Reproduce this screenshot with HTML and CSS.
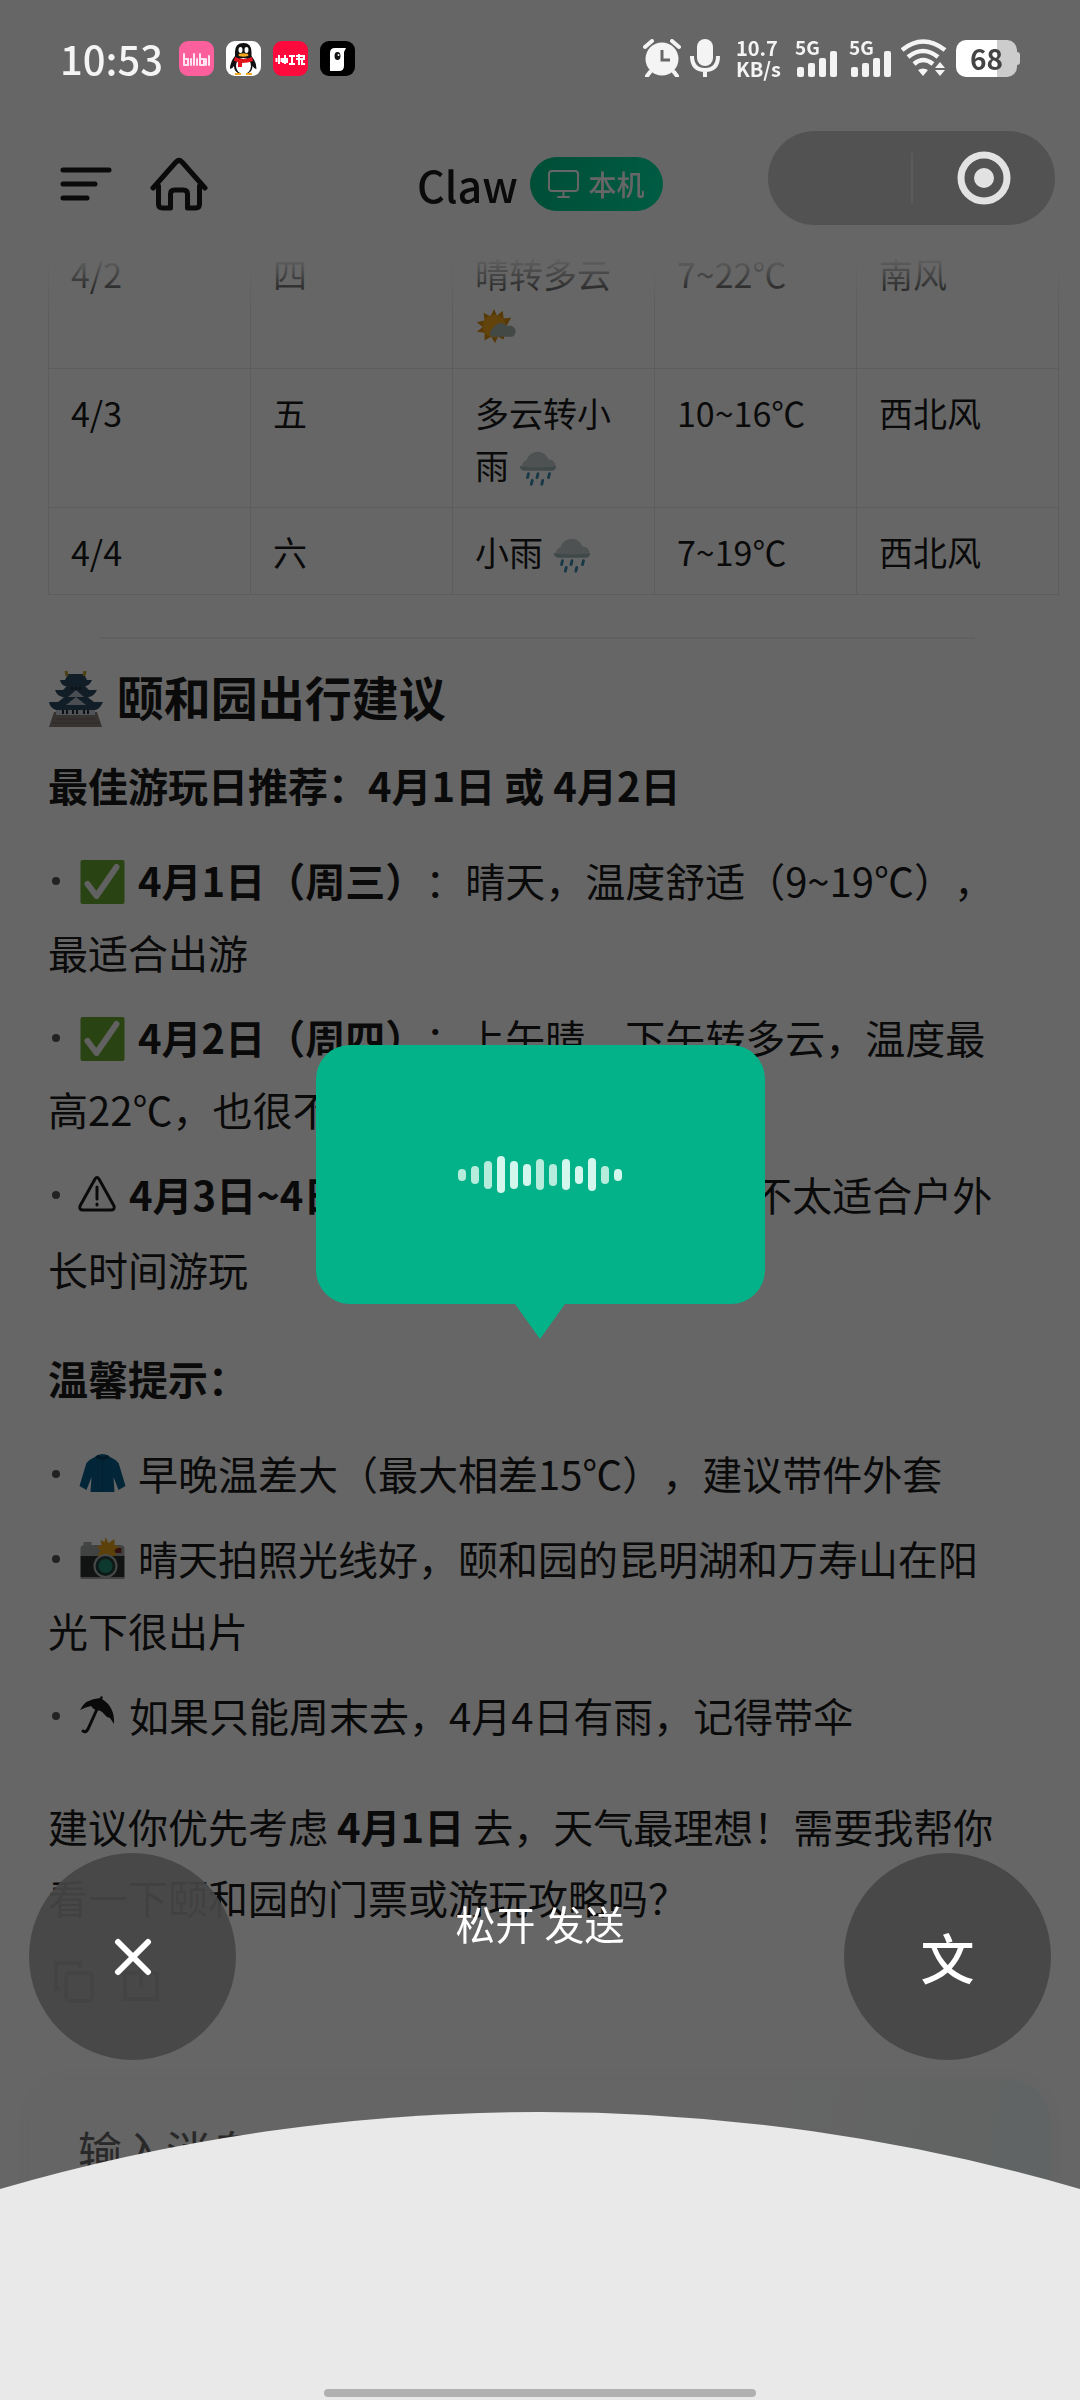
FILE: index.html
```html
<!DOCTYPE html>
<html lang="zh-CN">
<head>
<meta charset="utf-8">
<meta name="viewport" content="width=device-width, initial-scale=1">
<title>Claw</title>
<link rel="stylesheet" href="styles.css">
</head>
<body>
<svg class="defs" aria-hidden="true">
  <symbol id="rain" viewBox="0 0 42 44">
    <path d="M4 22a7 7 0 0 1 5-8 12 12 0 0 1 23-1 7 7 0 0 1 7 9z" fill="#c4cccc"/>
    <path d="M2 20c8 2 30 2 38 0 0 3-2 5-5 5H8c-4 0-6-2-6-5z" fill="#9fb6b6"/>
    <path d="M11 28l-1 4M21 28l-1 4M33 28l-1 4M15 35l-1 4M26 35l-1 4" stroke="#3a8cb0" stroke-width="3" stroke-linecap="round"/>
  </symbol>
  <symbol id="check" viewBox="0 0 50 46">
    <rect x="2" y="1" width="44" height="44" rx="2" fill="#66a82e"/>
    <path d="M9 25l9 12L38 8" fill="none" stroke="#f2f2f2" stroke-width="6" stroke-linecap="round" stroke-linejoin="round"/>
  </symbol>
  <symbol id="signal" viewBox="0 0 40 26">
    <rect x="0" y="16" width="7" height="10" rx="2"/><rect x="11" y="12" width="7" height="14" rx="2"/><rect x="22" y="7" width="7" height="19" rx="2"/><rect x="33" y="0" width="7" height="26" rx="2"/>
  </symbol>
</svg>

<div class="app">
  <header class="header">
    <nav class="nav">
      <button class="icon-btn" aria-label="菜单"><svg width="52" height="36" viewBox="0 0 52 36" stroke="#1a1a1a" stroke-width="5" stroke-linecap="round"><path d="M3 4H49M3 18H35M3 32H27"/></svg></button>
      <button class="icon-btn" aria-label="主页"><svg width="58" height="54" viewBox="0 0 58 54" fill="none" stroke="#1a1a1a" stroke-width="5" stroke-linecap="round" stroke-linejoin="round"><path d="M3 31L26 5q3-3 6 0L55 31M8.500 29v18q0 4 4 4h8V37q0-4 4-4h9q4 0 4 4v14h8q4 0 4-4V29"/></svg></button>
    </nav>
    <h1 class="title">Claw</h1>
    <button class="device"><svg width="31" height="30" viewBox="0 0 31 30" fill="none" stroke="#fff" stroke-width="2" stroke-linecap="round"><rect x="1" y="2" width="29" height="20" rx="3"/><path d="M15.500 22v5M10 28h11"/></svg>本机</button>
  </header>

  <main class="message">
    <table class="forecast">
      <tbody>
        <tr><td>4/2</td><td>四</td><td>晴转多云<svg class="emoji-s" viewBox="0 0 42 44" role="img" aria-label="晴间多云"><path d="M19 1l3 7 6-5 1 8 8-1-4 7-4 16-6-3-3 7-4-7-7 4v-8l-8-1 6-5-6-5 8-2-1-8 7 4z" fill="#d98e12"/><circle cx="19" cy="19" r="12" fill="#f5a81c"/><path d="M16 30a6 6 0 0 1 2-9 9 9 0 0 1 15-2 6 6 0 0 1 5 11z" fill="#a9b8ae"/></svg></td><td>7~22℃</td><td>南风</td></tr>
        <tr><td>4/3</td><td>五</td><td>多云转小雨 <svg class="emoji-s" role="img" aria-label="雨"><use href="#rain"/></svg></td><td>10~16℃</td><td>西北风</td></tr>
        <tr><td>4/4</td><td>六</td><td>小雨 <svg class="emoji-s" role="img" aria-label="雨"><use href="#rain"/></svg></td><td>7~19℃</td><td>西北风</td></tr>
      </tbody>
    </table>
    <hr class="rule">
    <h2 class="heading"><svg class="emoji-l" viewBox="0 0 58 58" role="img" aria-label="城堡">
      <path d="M1 57l5-15h43l5 15z" fill="#8b7f7b"/>
      <path d="M8 36h39v9H8zM14 23h27v9H14zM17 12h21v9H17z" fill="#c9d0dc"/>
      <path d="M1 32h9l8-6 10-6 10 6 8 6h9q-3 7-8 8H8q-6-2-7-8z" fill="#2c4a63"/>
      <path d="M18 35l10-8 10 8z" fill="#b9c1ce"/>
      <path d="M7 20h8l5-5h16l5 5h8q-3 6-8 7H15q-6-1-8-7z" fill="#2c4a63"/>
      <path d="M20 27l8-7 8 7z" fill="#b9c1ce"/>
      <path d="M12 10h5l3-6h16l3 6h5q-2 5-6 6H17q-4-1-5-6z" fill="#2c4a63"/>
      <path d="M18 1l1 5M37 1l-1 5" stroke="#c0a02a" stroke-width="3"/>
      <path d="M15 40v4M19 40v4M25 40v4M29 40v4M36 40v4M40 40v4M24 17v3M28 17v3M32 17v3" stroke="#26282e" stroke-width="2"/>
      <path d="M8 49h38M5 53h46" stroke="#776b68" stroke-width="1"/></svg> 颐和园出行建议</h2>
    <p class="para"><strong>最佳游玩日推荐：4月1日 或 4月2日</strong></p>
    <ul class="list">
      <li><svg class="emoji" role="img" aria-label="推荐"><use href="#check"/></svg> <strong>4月1日（周三）</strong>：晴天，温度舒适（9~19℃），最适合出游</li>
      <li><svg class="emoji" role="img" aria-label="推荐"><use href="#check"/></svg> <strong>4月2日（周四）</strong>：上午晴，下午转多云，温度最高22℃，也很不错</li>
      <li><span class="glyph"><svg width="38" height="38" viewBox="0 0 38 38" role="img" aria-label="注意" fill="none" stroke="#1a1a1a" stroke-width="3" stroke-linejoin="round" stroke-linecap="round"><path d="M17 4q2-3 4 0l15 27q1 4-3 4H5q-4 0-3-4zM19 12v12M19 29v1"/></svg></span> <strong>4月3日~4日（周五六）</strong> ：有小雨，不太适合户外长时间游玩</li>
    </ul>
    <p class="para"><strong>温馨提示：</strong></p>
    <ul class="list">
      <li><svg class="emoji" viewBox="0 0 50 46" role="img" aria-label="外套"><path d="M18 4q6-4 12 0l7 4q3 2 4 6l6 20-7 4-5-13 1 15H12l1-15-5 13-7-4 6-20q1-4 4-6z" fill="#075f8c"/><path d="M18 4q6 5 12 0" fill="none" stroke="#033f60" stroke-width="3"/><path d="M24 8v31" stroke="#064f76" stroke-width="1"/></svg> 早晚温差大（最大相差15℃），建议带件外套</li>
      <li><svg class="emoji" viewBox="0 0 50 46" role="img" aria-label="相机"><path d="M2 12q0-4 4-4h36q4 0 4 4v8H2z" fill="#a3a6a6"/><path d="M2 19h44v21H2z" fill="#2f3333"/><path d="M2 40h44v2H2z" fill="#a3a6a6"/><path d="M5 5h8v4H5z" fill="#aaa"/><path d="M35 11h8v5h-8z" fill="#7a2a22"/><path d="M27 0l3 6 6-4v6l5 2-5 3 2 6H19l3-6-4-3 5-2-1-5 4 2z" fill="#e5a21c"/><circle cx="27" cy="29" r="12" fill="#b3b8b7"/><circle cx="27" cy="29" r="10" fill="#24423d"/><circle cx="27" cy="29" r="7" fill="#248f75"/></svg> 晴天拍照光线好，颐和园的昆明湖和万寿山在阳光下很出片</li>
      <li><span class="glyph"><svg width="38" height="38" viewBox="0 0 38 38" role="img" aria-label="雨伞"><path d="M2 14Q7 3 22 2l1-2 2 1-1 2q13 8 12 25l-4-6q-4-1-6-4-3-4-8-4-3-1-5-4-5 1-11 4z" fill="#1a1a1a"/><path d="M20 11L10 33q-2 4-5 2" fill="none" stroke="#1a1a1a" stroke-width="3" stroke-linecap="round"/></svg></span> 如果只能周末去，4月4日有雨，记得带伞</li>
    </ul>
    <p class="para closing">建议你优先考虑 <strong>4月1日</strong> 去，天气最理想！需要我帮你看一下颐和园的门票或游玩攻略吗？</p>
    <div class="actions">
      <button class="icon-btn" aria-label="复制"><svg width="44" height="44" viewBox="0 0 44 44" fill="none" stroke="#777" stroke-width="4"><rect x="14" y="14" width="26" height="28" rx="4"/><path d="M8 30H4V4h24v5"/></svg></button>
      <button class="icon-btn" aria-label="分享"><svg width="38" height="44" viewBox="0 0 38 44" fill="none" stroke="#777" stroke-width="4"><path d="M3 14h32v26H3zM19 4v24"/></svg></button>
    </div>
  </main>

  <form class="composer"><input class="composer-input" type="text" placeholder="输入消息" aria-label="输入消息"></form>
</div>

<section class="recorder" aria-label="语音输入">
  <div class="bubble">
    <div class="wave"><i class="h1 dim"></i><i class="h2 dim"></i><i class="h4 dim"></i><i class="h7"></i><i class="h4"></i><i class="h3"></i><i class="h5 dim"></i><i class="h3 dim"></i><i class="h5"></i><i class="h2"></i><i class="h6"></i><i class="h2 dim"></i><i class="h1"></i></div>
  </div>
  <div class="controls">
    <button class="round" aria-label="取消"><svg width="38" height="38" viewBox="0 0 38 38" stroke="#fff" stroke-width="6" stroke-linecap="round"><path d="M4 4l30 30M34 4L4 34"/></svg></button>
    <p class="hint">松开 发送</p>
    <button class="round">文</button>
  </div>
  <svg class="dome" viewBox="0 0 1080 288" preserveAspectRatio="none" aria-hidden="true"><path d="M0 77A1932 1932 0 0 1 1080 77V288H0z" fill="#e9e9e9"/></svg>
  <div class="home-bar"></div>
</section>

<div class="status">
  <div class="status-left">
    <time class="clock">10:53</time>
    <span class="appicon pink"><svg width="35" height="35" viewBox="0 0 35 35" fill="none" stroke="#ffe3ee" stroke-width="2" stroke-linecap="round" aria-hidden="true"><path d="M5 13v11M5 18h4v6H5M12 18v6M15 13v11M18 18v6M21 13v11M21 18h4v6h-4M27 18v6M30 15v9"/></svg></span>
    <span class="appicon white"><svg width="35" height="35" viewBox="0 0 35 35" aria-hidden="true"><path d="M17.500 2q8 0 8 9v4q5 6 5 13-2 0-4-3 0 5-4 7H12q-4-2-4-7-2 3-4 3 0-7 5-13v-4q0-9 8.500-9z" fill="#111"/><ellipse cx="17.500" cy="25" rx="7.500" ry="8" fill="#fff"/><ellipse cx="14.500" cy="9" rx="2" ry="3" fill="#fff"/><ellipse cx="20.500" cy="9" rx="2" ry="3" fill="#fff"/><ellipse cx="17.500" cy="14" rx="5" ry="1.700" fill="#f5a91d"/><path d="M9 16q8 4 17 0l1 4q-5 2-11 2v4h-4v-5l-4-1z" fill="#e3151c"/><path d="M9 33h6M20 33h6" stroke="#f5a91d" stroke-width="2"/></svg></span>
    <span class="appicon red"><svg width="35" height="35" viewBox="0 0 35 35" fill="none" stroke="#fff" stroke-width="2" aria-hidden="true"><path d="M6 14v9M3.500 17v4M8.500 17v4M12 14v9M10 17v5M14 17v5M16 15h6M19 15v8M16 23h6M23 15h8v3h-8M26 13v11M29 18v5h3"/></svg></span>
    <span class="appicon black"><svg width="35" height="35" viewBox="0 0 35 35" aria-hidden="true"><path d="M10 12q0-5 5-5h11l-2 4v14q0 5-5 5h-9z" fill="#fff"/><ellipse cx="17.500" cy="15" rx="3" ry="4" fill="#111"/><circle cx="18.500" cy="14" r="1" fill="#fff"/></svg></span>
  </div>
  <div class="status-right">
    <svg width="38" height="38" viewBox="0 0 38 38" aria-hidden="true"><circle cx="19" cy="20" r="16.500" fill="#f4f4f4"/><path d="M2 8l7-6M36 8l-7-6M7 33l-3 4M31 33l3 4" stroke="#f4f4f4" stroke-width="4" stroke-linecap="round"/><path d="M19 11v10h8" fill="none" stroke="#666" stroke-width="3"/></svg>
    <svg class="mic" width="30" height="38" viewBox="0 0 30 38" aria-hidden="true"><rect x="7" y="0" width="16" height="27" rx="8" fill="#f4f4f4"/><path d="M2 17q0 14 13 14t13-14M15 31v7" fill="none" stroke="#f4f4f4" stroke-width="4"/></svg>
    <div class="rate"><span>10.7</span><span>KB/s</span></div>
    <div class="cell"><span>5G</span><svg viewBox="0 0 40 26" aria-hidden="true"><use href="#signal"/></svg></div>
    <div class="cell"><span>5G</span><svg viewBox="0 0 40 26" aria-hidden="true"><use href="#signal"/></svg></div>
    <svg class="wifi" width="46" height="38" viewBox="0 0 46 38" aria-hidden="true"><g fill="none" stroke="#f4f4f4" stroke-width="4.500"><path d="M1 11Q22-6 44 11M7 18Q22 6 37 18M13 25Q22 17 32 25"/></g><path d="M17 31q5-3 10 0l-5 6zM34 29l5-6 5 6zM34 31l5 6 5-6z" fill="#f4f4f4"/></svg>
    <div class="battery">68</div>
  </div>
</div>

<div class="capsule">
  <button class="capsule-btn" aria-label="更多"></button>
  <button class="capsule-btn target" aria-label="关闭"><svg width="54" height="54" viewBox="0 0 54 54"><circle cx="27" cy="27" r="23" fill="none" stroke="#e2e2e2" stroke-width="7"/><circle cx="27" cy="27" r="10" fill="#e2e2e2"/></svg></button>
</div>
</body>
</html>
```
FILE: styles.css
```css
* { box-sizing: border-box; }
body {
  margin: 0;
  background: #fff;
  color: #1a1a1a;
  font-family: "Noto Sans CJK SC", sans-serif;
  font-size: 40px;
  line-height: 72px;
  text-spacing-trim: space-all;
}
button { border: 0; padding: 0; margin: 0; background: none; color: inherit; font: inherit; }
h1, h2, p, ul { margin: 0; padding: 0; }
svg { display: block; }
.defs { position: absolute; width: 0; height: 0; }

.app { display: flex; flex-direction: column; min-height: 100vh; }

.header {
  position: fixed;
  top: 0;
  left: 0;
  right: 0;
  z-index: 1;
  display: flex;
  align-items: center;
  justify-content: center;
  gap: 12px;
  height: 310px;
  padding-bottom: 72px;
  padding-top: 130px;
  background: linear-gradient(#fff 256px, rgba(255, 255, 255, 0) 310px);
}
.nav { position: absolute; left: 60px; display: flex; align-items: center; gap: 38px; }
.icon-btn { display: flex; }
.title { font-size: 43px; font-weight: 500; line-height: 54px; }
.device {
  display: flex;
  align-items: center;
  justify-content: center;
  gap: 9px;
  width: 133px;
  height: 54px;
  border-radius: 27px;
  background: linear-gradient(100deg, #00c288, #00e6aa);
  color: #fff;
  font-size: 28px;
  font-weight: 500;
}

.message { flex: 1; padding: 229px 21px 61px 48px; }
.forecast {
  width: 100%;
  table-layout: fixed;
  border-collapse: collapse;
  font-size: 34px;
  line-height: 52px;
}
.forecast td {
  padding: 18px 22px 16px;
  border: 1px solid #e9e9e9;
  text-align: left;
  vertical-align: top;
}
.emoji, .emoji-s, .emoji-l, .glyph { display: inline-block; }
.emoji-s { width: 42px; height: 42px; vertical-align: -10px; }
.emoji { width: 51px; height: 46px; vertical-align: -8px; }
.emoji-l { width: 58px; height: 58px; vertical-align: -12px; }
.glyph { width: 42px; height: 75px; padding-top: 17px; vertical-align: top; }
.rule { height: 2px; margin: 42px 84px 0 52px; border: 0; background: #f0f0f0; }
.heading { margin-top: 24px; font-size: 47px; font-weight: 700; line-height: 66px; }
.para { margin-top: 20px; padding-right: 46px; }
.list { margin: 23px 0 37px; padding-right: 46px; list-style: none; }
.list li + li { margin-top: 13px; }
.list li::before {
  content: "";
  display: inline-block;
  width: 8px;
  height: 8px;
  margin: 0 18px 0 4px;
  border-radius: 50%;
  background: #555;
  vertical-align: 12px;
}
.closing { line-height: 71px; }
.actions { display: flex; gap: 26px; margin-top: 26px; padding-left: 4px; }

.composer {
  margin: 0 30px 30px;
  height: 290px;
  padding: 34px 48px;
  border-radius: 40px;
  background: linear-gradient(100deg, #fcfcfc 70%, #f0f9f9);
  box-shadow: 0 0 30px rgba(0, 0, 0, .04);
}
.composer-input {
  width: 100%;
  height: 72px;
  padding: 0;
  border: 0;
  background: none;
  font: inherit;
  font-size: 44px;
}
.composer-input::placeholder { color: #666; }

/* Voice recording layer */
.recorder {
  position: fixed;
  inset: 0;
  z-index: 2;
  display: flex;
  flex-direction: column;
  padding-top: 1045px;
  background: rgba(0, 0, 0, .6);
}
.bubble {
  position: relative;
  display: flex;
  align-items: center;
  justify-content: center;
  align-self: center;
  width: 449px;
  height: 259px;
  border-radius: 34px;
  background: #03b288;
}
.bubble::after {
  content: "";
  position: absolute;
  top: 100%;
  border: 25px solid transparent;
  border-top: 35px solid #03b288;
  border-bottom: 0;
}
.wave { display: flex; align-items: center; gap: 5px; }
.wave i { width: 8px; border-radius: 4px; background: #d3f7ec; }
.wave .dim { background: #b5ecdc; }
.h1 { height: 12px; }
.h2 { height: 18px; }
.h3 { height: 22px; }
.h4 { height: 28px; }
.h5 { height: 31px; }
.h6 { height: 33px; }
.h7 { height: 37px; }
.controls {
  display: flex;
  align-items: center;
  justify-content: space-between;
  margin: auto 29px 52px;
  color: #fff;
}
.round {
  display: flex;
  align-items: center;
  justify-content: center;
  width: 207px;
  height: 207px;
  border-radius: 50%;
  background: rgba(70, 70, 70, .93);
  font-size: 54px;
  font-weight: 500;
}
.hint { padding-bottom: 68px; }
.dome { flex: none; width: 100%; height: 288px; }
.home-bar {
  position: absolute;
  bottom: 3px;
  left: 30%;
  right: 30%;
  height: 8px;
  border-radius: 4px;
  background: #b0b0b0;
}

/* System status bar */
.status {
  position: fixed;
  top: 0;
  left: 0;
  right: 0;
  z-index: 3;
  display: flex;
  align-items: center;
  justify-content: space-between;
  height: 116px;
  padding: 0 63px 0 60px;
  color: #f4f4f4;
  font-weight: 700;
}
.status-left, .status-right { display: flex; align-items: center; }
.status-left { gap: 12px; }
.clock { margin-right: 4px; font-size: 40px; font-weight: 500; line-height: 60px; }
.appicon { width: 35px; height: 35px; border-radius: 9px; overflow: hidden; }
.pink { background: #fb5f9c; }
.white { background: #fff; }
.red { background: #ff0a3c; }
.black { background: #000; }
.mic { margin-left: 9px; }
.rate { display: flex; flex-direction: column; margin-left: 16px; font-size: 20px; line-height: 21px; width: 44px; }
.cell { display: flex; flex-direction: column; width: 42px; height: 38px; margin-left: 15px; font-size: 19px; line-height: 16px; }
.cell svg { flex: none; width: 40px; height: 26px; margin: -4px 0 0 2px; fill: #f4f4f4; }
.cell + .cell { margin-left: 12px; }
.wifi { margin-left: 10px; }
.battery {
  position: relative;
  width: 61px;
  height: 37px;
  margin-left: 9px;
  border-radius: 10px;
  background: linear-gradient(90deg, #fff 67%, #ccc 67%);
  color: #444;
  font-size: 28px;
  line-height: 36px;
  text-align: center;
}
.battery::after {
  content: "";
  position: absolute;
  right: -3px;
  top: 12px;
  width: 3px;
  height: 13px;
  border-radius: 0 3px 3px 0;
  background: #ccc;
}

.capsule {
  position: fixed;
  top: 131px;
  right: 25px;
  z-index: 3;
  display: flex;
  align-items: center;
  width: 287px;
  height: 94px;
  border-radius: 47px;
  background: #525252;
}
.capsule-btn { display: flex; align-items: center; justify-content: center; flex: 1; height: 50px; }
.target { border-left: 2px solid #5c5c5c; }
```
